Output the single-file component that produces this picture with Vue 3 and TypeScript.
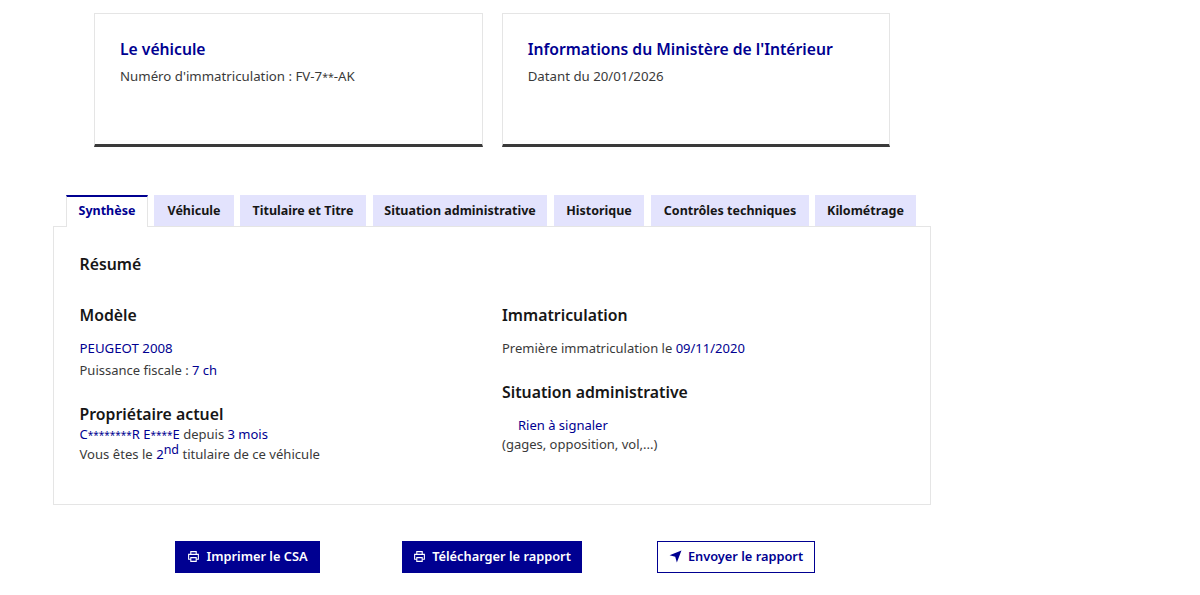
<script setup lang="ts">
const tabs = [
  { label: 'Synthèse', width: 82, gap: 6, active: true },
  { label: 'Véhicule', width: 80, gap: 6, active: false },
  { label: 'Titulaire et Titre', width: 126, gap: 7, active: false },
  { label: 'Situation administrative', width: 174, gap: 7, active: false },
  { label: 'Historique', width: 90, gap: 7, active: false },
  { label: 'Contrôles techniques', width: 158, gap: 6, active: false },
  { label: 'Kilométrage', width: 101, gap: 0, active: false },
]
</script>

<template>
  <div class="page">
    <section class="cards">
      <article class="card">
        <h2>Le véhicule</h2>
        <p>Numéro d'immatriculation : FV-7<span class="stars">**</span>-AK</p>
      </article>
      <article class="card">
        <h2>Informations du Ministère de l'Intérieur</h2>
        <p>Datant du 20/01/2026</p>
      </article>
    </section>

    <nav class="tabs">
      <button
        v-for="tab in tabs"
        :key="tab.label"
        class="tab"
        :class="{ active: tab.active }"
        :style="{ width: tab.width + 'px', marginRight: tab.gap + 'px' }"
      >{{ tab.label }}</button>
    </nav>

    <section class="panel">
      <h3 class="summary">Résumé</h3>
      <div class="columns">
        <div class="col">
          <h4>Modèle</h4>
          <p class="blue first model">PEUGEOT 2008</p>
          <p class="line">Puissance fiscale : <span class="blue">7 ch</span></p>
          <h4 class="owner">Propriétaire actuel</h4>
          <p class="owner-line"><span class="blue">C<span class="stars">********</span>R E<span class="stars">****</span>E</span> depuis <span class="blue">3 mois</span></p>
          <p class="rank">Vous êtes le <span class="blue">2<sup>nd</sup></span> titulaire de ce véhicule</p>
        </div>
        <div class="col">
          <h4>Immatriculation</h4>
          <p class="first">Première immatriculation le <span class="blue">09/11/2020</span></p>
          <h4 class="situation">Situation administrative</h4>
          <p class="blue nothing">Rien à signaler</p>
          <p class="note">(gages, opposition, vol,...)</p>
        </div>
      </div>
    </section>

    <div class="actions">
      <button class="btn solid print">
        <svg viewBox="0 0 24 24" width="13" height="13" fill="none" stroke="currentColor" stroke-width="2"><path d="M7 8V3h10v5M7 17H3V8h18v9h-4"/><path d="M7 14h10v7H7z"/></svg>
        Imprimer le CSA
      </button>
      <button class="btn solid download">
        <svg viewBox="0 0 24 24" width="13" height="13" fill="none" stroke="currentColor" stroke-width="2"><path d="M7 8V3h10v5M7 17H3V8h18v9h-4"/><path d="M7 14h10v7H7z"/></svg>
        Télécharger le rapport
      </button>
      <button class="btn outline send">
        <svg viewBox="0 0 24 24" width="13" height="13" fill="currentColor"><path d="M1 9.5 23 1l-8.500 22-3-10.500L17 7l-5.500 5.500z"/></svg>
        Envoyer le rapport
      </button>
    </div>
  </div>
</template>

<style>
body { background: #fff; }
</style>

<style scoped>
.page {
  width: 1200px;
  height: 595px;
  overflow: hidden;
  padding-top: 13px;
  box-sizing: border-box;
  font-family: "Noto Sans", "Liberation Sans", sans-serif;
  color: #3a3a3a;
  font-size: 13px;
  background: #fff;
}
h2, h3, h4, p { margin: 0; }
.blue { color: #000091; }
.stars { font-size: 10.5px; }
.owner-line .stars { font-size: 10px; }

.cards {
  display: flex;
  gap: 19px;
  margin-left: 94px;
}
.card {
  width: 388.67px;
  height: 134px;
  box-sizing: border-box;
  border: 1px solid #e5e5e5;
  border-bottom: 3px solid #3a3a3a;
  padding: 23px 25px;
}
.card h2 {
  font-size: 15.7px;
  line-height: 24px;
  font-weight: 600;
  color: #000091;
}
.card p {
  margin-top: 4px;
  line-height: 22px;
  font-size: 13.25px;
}

.tabs {
  display: flex;
  margin: 48px 0 0 66px;
  height: 32px;
  position: relative;
  z-index: 1;
}
.tab {
  height: 31px;
  padding: 0;
  border: 0;
  background: #e3e3fd;
  color: #161616;
  font: 700 12.5px "Noto Sans", "Liberation Sans", sans-serif;
}
.tab.active {
  height: 32px;
  background: #fff;
  color: #000091;
  border-top: 2px solid #000091;
  border-left: 1px solid #e5e5e5;
  border-right: 1px solid #e5e5e5;
  padding-bottom: 3px;
}

.panel {
  width: 878px;
  height: 279px;
  box-sizing: border-box;
  margin: -1px 0 0 53px;
  border: 1px solid #e5e5e5;
  padding: 25px 25.5px 0;
}
.summary, .col h4 {
  font-size: 15.8px;
  line-height: 24px;
  font-weight: 600;
  color: #161616;
}
.columns {
  display: grid;
  grid-template-columns: 422.5px 1fr;
  margin-top: 27px;
}
.first { margin-top: 10px; line-height: 22px; }
.model { font-size: 13.25px; }
.line { line-height: 22px; }
.owner { margin-top: 21px; }
.owner-line { line-height: 16px; }
.rank { line-height: 24px; margin-top: -1px; font-size: 13.1px; }
.rank sup { font-size: 12.5px; line-height: 0; }
.situation { margin-top: 21px; }
.nothing { margin: 11px 0 0 16px; line-height: 20px; }
.note { line-height: 18px; }

.actions {
  display: flex;
  margin: 36px 0 0 175px;
}
.btn {
  display: flex;
  align-items: center;
  justify-content: center;
  gap: 6px;
  height: 32px;
  box-sizing: border-box;
  padding: 0 0 2px;
  font: 600 12.8px "Noto Sans", "Liberation Sans", sans-serif;
}
.solid {
  background: #000091;
  color: #fff;
  border: 0;
}
.outline {
  background: #fff;
  color: #000091;
  border: 1px solid #000091;
}
.print { width: 145px; }
.download { width: 180px; margin-left: 82px; }
.send { width: 158px; margin-left: 75px; }
</style>
